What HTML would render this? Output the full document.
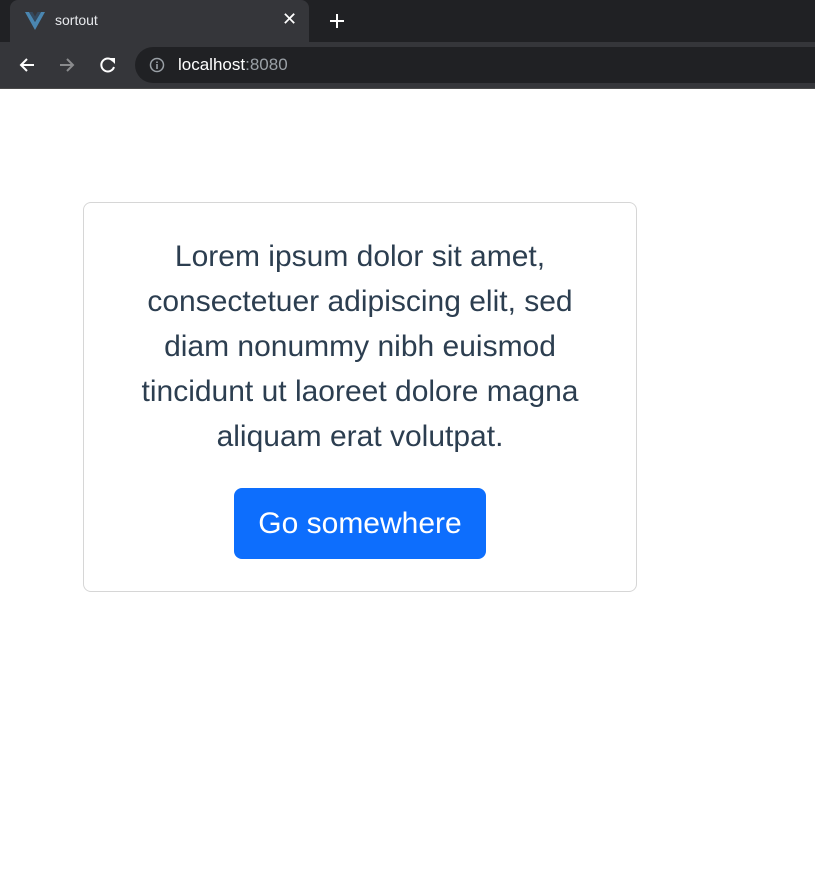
<!DOCTYPE html>
<html><head><style>
body{margin:0;width:815px;height:883px;background:#fff;position:relative;overflow:hidden;font-family:"Liberation Sans",Arial,sans-serif}
.tabs{position:absolute;left:0;top:0;width:815px;height:42px;background:#202124}
.tab{position:absolute;left:10px;top:0;width:299px;height:42px;background:#35363a;border-radius:8px 8px 0 0}
.tb{position:absolute;left:0;top:42px;width:815px;height:46px;background:#35363a;border-bottom:1px solid #4a4a4a}
.addr{position:absolute;left:135px;top:5px;width:700px;height:36px;background:#202124;border-radius:18px}
.card{position:absolute;left:83px;top:202px;width:552px;height:388px;border:1px solid #d6d6d6;border-radius:8px}
.l{position:absolute;left:83px;width:554px;text-align:center;font-size:30px;color:#2c3e50;line-height:45px}
.btn{position:absolute;left:234px;top:488px;width:252px;height:71px;background:#0d6efd;border-radius:8px;color:#fff;font-size:30px;line-height:71px;text-align:center}
</style></head><body>
<div class="tabs"><div class="tab">
<svg style="position:absolute;left:15px;top:12px" width="20" height="18" viewBox="0 0 20 18"><path d="M0 0h4l6 10 6-10h4L10 18z" fill="#4a86b0"/><path d="M4 0h3.5L10 4.5 12.5 0H16L10 10z" fill="#34495e"/></svg>
<span style="position:absolute;left:45px;top:12px;color:#e8eaed;font-size:14px">sortout</span>
<span style="position:absolute;left:272px;top:9px;color:#fff;font-size:18px">✕</span>
</div>
<svg style="position:absolute;left:329px;top:13px" width="16" height="16"><path d="M8 1v14M1 8h14" stroke="#fff" stroke-width="2"/></svg>
</div>
<div class="tb">
<svg style="position:absolute;left:18px;top:14px" width="18" height="18"><path d="M16 9H3M9 3L3 9l6 6" stroke="#fff" stroke-width="2" fill="none"/></svg>
<svg style="position:absolute;left:58px;top:14px" width="18" height="18"><path d="M2 9h13M9 3l6 6-6 6" stroke="#8a8b8d" stroke-width="2" fill="none"/></svg>
<svg style="position:absolute;left:98px;top:13px" width="20" height="20"><path d="M15 6A6.5 6.5 0 1 0 16 12" stroke="#fff" stroke-width="2" fill="none"/><path d="M11 3h6v6z" fill="#fff"/></svg>
<div class="addr">
<svg style="position:absolute;left:14px;top:10px" width="16" height="16"><circle cx="8" cy="8" r="6.5" stroke="#9aa0a6" stroke-width="1.5" fill="none"/><path d="M8 7v5M8 4.5v1.5" stroke="#9aa0a6" stroke-width="1.6"/></svg>
<span style="position:absolute;left:43px;top:8px;font-size:17px;color:#fff">localhost<span style="color:#9aa0a6">:8080</span></span>
</div></div>
<div class="card"></div>
<div class="l" style="top:234px">Lorem ipsum dolor sit amet,</div>
<div class="l" style="top:279px">consectetuer adipiscing elit, sed</div>
<div class="l" style="top:324px">diam nonummy nibh euismod</div>
<div class="l" style="top:369px">tincidunt ut laoreet dolore magna</div>
<div class="l" style="top:414px">aliquam erat volutpat.</div>
<div class="btn">Go somewhere</div>
</body></html>
